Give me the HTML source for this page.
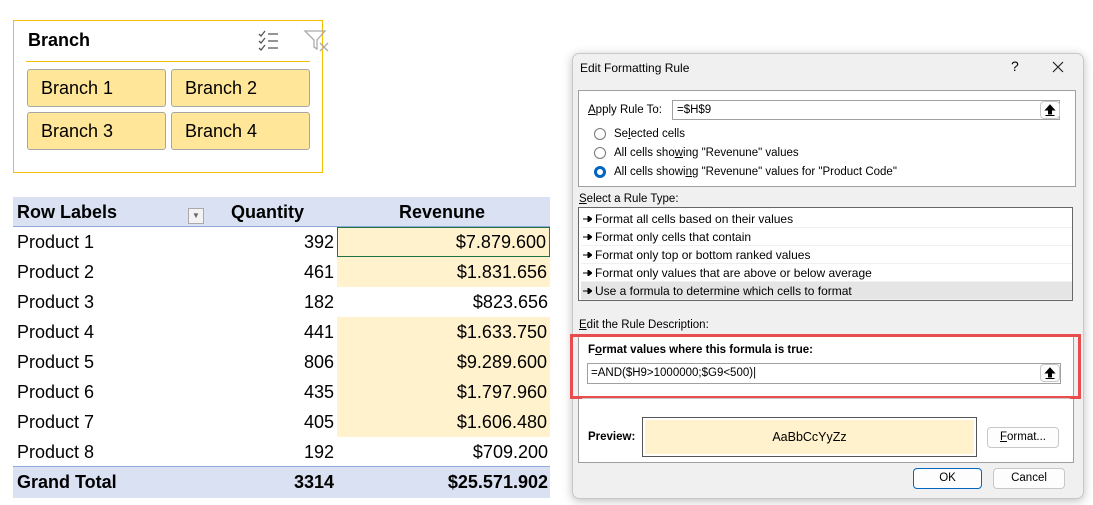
<!DOCTYPE html><html><head><style>
body{margin:0;width:1093px;height:505px;background:#fff;position:relative;overflow:hidden;font-family:"Liberation Sans",sans-serif;}
.a{position:absolute}
.slb{background:#ffe699;border:1px solid #a6a6a6;border-radius:3px;font-size:18px;line-height:36px;padding-left:13px;box-sizing:border-box;height:38px}
.row{position:absolute;left:13px;width:537px;height:30px;font-size:18px;line-height:30px}
.row span{position:absolute}
.d{font-size:11.5px;color:#000}
.ul{text-decoration:underline}
.btn{position:absolute;border:1px solid #c8c8c8;background:#fdfdfd;border-radius:4px;font-size:11.5px;text-align:center;box-sizing:border-box}
.radio{position:absolute;left:594px;width:12px;height:12px;border:1px solid #777;border-radius:50%;box-sizing:border-box;background:#fff}
.li{position:absolute;left:581px;width:491px;height:18px;line-height:18px;font-size:12px;border-bottom:1px solid #f0f0f0;box-sizing:border-box;padding-left:2px}
.ar{display:inline-block;width:9px;height:6px;margin-right:3px;vertical-align:1px}
</style></head><body>
<div class="a" style="left:13px;top:20px;width:308px;height:151px;border:1px solid #f5c000"></div>
<div class="a" style="left:28px;top:30px;font-size:18px;font-weight:bold">Branch</div>
<svg class="a" style="left:257px;top:29px" width="26" height="24"><g stroke="#555" fill="none" stroke-width="1.3"><path d="M2 5l2 2 4-5M2 12l2 2 4-5M2 19l2 2 4-5"/><path d="M11 5h10M11 12h10M11 19h10"/></g></svg>
<svg class="a" style="left:303px;top:29px" width="28" height="24"><path d="M2 2h20l-8 9v9l-3-2v-7z" fill="none" stroke="#aaa" stroke-width="1.3"/><path d="M17 14l8 8M25 14l-8 8" stroke="#aaa" stroke-width="1.3"/></svg>
<div class="a" style="left:26px;top:61px;width:284px;height:1px;background:#f5c000"></div>
<div class="a slb" style="left:27px;top:69px;width:139px">Branch 1</div>
<div class="a slb" style="left:171px;top:69px;width:139px">Branch 2</div>
<div class="a slb" style="left:27px;top:112px;width:139px">Branch 3</div>
<div class="a slb" style="left:171px;top:112px;width:139px">Branch 4</div>

<div class="row" style="top:197px;background:#d9e1f2;font-weight:bold;border-bottom:1px solid #8eaadb;height:29px"><span style="left:4px">Row Labels</span><span style="left:218px">Quantity</span><span style="left:386px">Revenune</span>
<div class="a" style="left:175px;top:11px;width:14px;height:14px;border:1px solid #aaa;background:#f3f3f3;font-size:8px;line-height:14px;text-align:center;color:#666">▼</div></div>
<div class="row" style="top:227px"><span style="left:4px">Product 1</span><span style="right:216px">392</span><span style="left:324px;width:211px;height:28px;background:#fff2cc;border:1px solid #217346;line-height:28px;text-align:right;box-sizing:content-box"><span style="right:3px;position:absolute">$7.879.600</span></span></div>
<div class="row" style="top:257px"><span style="left:4px">Product 2</span><span style="right:216px">461</span><span style="left:324px;width:213px;background:#fff2cc"><span style="right:3px;position:absolute">$1.831.656</span>&nbsp;</span></div>
<div class="row" style="top:287px"><span style="left:4px">Product 3</span><span style="right:216px">182</span><span style="right:2px">$823.656</span></div>
<div class="row" style="top:317px"><span style="left:4px">Product 4</span><span style="right:216px">441</span><span style="left:324px;width:213px;background:#fff2cc"><span style="right:3px;position:absolute">$1.633.750</span>&nbsp;</span></div>
<div class="row" style="top:347px"><span style="left:4px">Product 5</span><span style="right:216px">806</span><span style="left:324px;width:213px;background:#fff2cc"><span style="right:3px;position:absolute">$9.289.600</span>&nbsp;</span></div>
<div class="row" style="top:377px"><span style="left:4px">Product 6</span><span style="right:216px">435</span><span style="left:324px;width:213px;background:#fff2cc"><span style="right:3px;position:absolute">$1.797.960</span>&nbsp;</span></div>
<div class="row" style="top:407px"><span style="left:4px">Product 7</span><span style="right:216px">405</span><span style="left:324px;width:213px;background:#fff2cc"><span style="right:3px;position:absolute">$1.606.480</span>&nbsp;</span></div>
<div class="row" style="top:437px"><span style="left:4px">Product 8</span><span style="right:216px">192</span><span style="right:2px">$709.200</span></div>
<div class="row" style="top:466px;height:31px;background:#d9e1f2;border-top:1px solid #8eaadb;font-weight:bold"><span style="left:4px">Grand Total</span><span style="right:216px">3314</span><span style="right:2px">$25.571.902</span></div>

<div class="a" style="left:572px;top:53px;width:510px;height:444px;background:#f0f0f0;border:1px solid #c8c8c8;border-radius:7px;box-shadow:0 2px 10px rgba(0,0,0,.25)"></div>
<div class="a d" style="left:580px;top:61px;font-size:12px">Edit Formatting Rule</div>
<div class="a" style="left:1011px;top:58px;font-size:14px">?</div>
<svg class="a" style="left:1052px;top:61px" width="12" height="12"><path d="M1 1l10 10M11 1L1 11" stroke="#222" stroke-width="1.2"/></svg>
<div class="a" style="left:578px;top:90px;width:496px;height:95px;background:#fff;border:1px solid #a0a0a0"></div>
<div class="a d" style="left:588px;top:104px"><span class="ul">A</span>pply Rule To:</div>
<div class="a" style="left:672px;top:100px;width:388px;height:20px;border:1px solid #a0a0a0;background:#fff;box-sizing:border-box;font-size:11.5px;line-height:18px;padding-left:4px">=$H$9</div>
<div class="btn" style="left:1040px;top:101px;width:20px;height:18px"><svg width="12" height="14" style="margin-top:1px"><path d="M6 2L1.5 7H4.5v4h3V7h3z M1.5 12.5h9" fill="#000" stroke="#000" stroke-width="1"/></svg></div>
<div class="radio" style="top:128px"></div><div class="a d" style="left:614px;top:128px">Se<span class="ul">l</span>ected cells</div>
<div class="radio" style="top:147px"></div><div class="a d" style="left:614px;top:147px">All cells sho<span class="ul">w</span>ing "Revenune" values</div>
<div class="radio" style="top:166px;border:3.5px solid #0067c0"></div><div class="a d" style="left:614px;top:166px">All cells showi<span class="ul">n</span>g "Revenune" values for "Product Code"</div>
<div class="a d" style="left:579px;top:193px"><span class="ul">S</span>elect a Rule Type:</div>
<div class="a" style="left:578px;top:207px;width:495px;height:94px;background:#fff;border:1px solid #666;box-sizing:border-box"></div>
<div class="li" style="top:210px"><svg class="ar"><path d="M0 3h5M5 0l4 3-4 3z" stroke="#000" fill="#000"/></svg>Format all cells based on their values</div>
<div class="li" style="top:228px"><svg class="ar"><path d="M0 3h5M5 0l4 3-4 3z" stroke="#000" fill="#000"/></svg>Format only cells that contain</div>
<div class="li" style="top:246px"><svg class="ar"><path d="M0 3h5M5 0l4 3-4 3z" stroke="#000" fill="#000"/></svg>Format only top or bottom ranked values</div>
<div class="li" style="top:264px"><svg class="ar"><path d="M0 3h5M5 0l4 3-4 3z" stroke="#000" fill="#000"/></svg>Format only values that are above or below average</div>
<div class="li" style="top:282px;background:#e5e5e5"><svg class="ar"><path d="M0 3h5M5 0l4 3-4 3z" stroke="#000" fill="#000"/></svg>Use a formula to determine which cells to format</div>
<div class="a d" style="left:579px;top:319px"><span class="ul">E</span>dit the Rule Description:</div>
<div class="a" style="left:578px;top:335px;width:496px;height:128px;background:#fff;border:1px solid #a0a0a0;box-sizing:border-box"></div>
<div class="a" style="left:570px;top:334px;width:505px;height:59px;border:3px solid #e94c4c;box-sizing:content-box"></div>
<div class="a" style="left:582px;top:398px;width:488px;height:1px;background:#c8c8c8"></div>
<div class="a d" style="left:588px;top:344px;font-weight:bold">F<span class="ul">o</span>rmat values where this formula is true:</div>
<div class="a" style="left:587px;top:363px;width:474px;height:21px;border:1px solid #a0a0a0;background:#fff;box-sizing:border-box;font-size:11.5px;line-height:19px;padding-left:3px">=AND($H9&gt;1000000;$G9&lt;500)|</div>
<div class="btn" style="left:1040px;top:364px;width:20px;height:18px"><svg width="12" height="14" style="margin-top:1px"><path d="M6 2L1.5 7H4.5v4h3V7h3z M1.5 12.5h9" fill="#000" stroke="#000" stroke-width="1"/></svg></div>
<div class="a d" style="left:588px;top:431px;font-weight:bold">Preview:</div>
<div class="a" style="left:642px;top:417px;width:335px;height:40px;border:1px solid #555;box-sizing:border-box;background:#fff2cc;outline:2px solid #fff;outline-offset:-3px;text-align:center;line-height:38px;font-size:12.5px">AaBbCcYyZz</div>
<div class="btn" style="left:987px;top:427px;width:72px;height:21px;line-height:19px"><span class="ul">F</span>ormat...</div>
<div class="btn" style="left:913px;top:468px;width:69px;height:21px;line-height:19px;border-color:#0067c0">OK</div>
<div class="btn" style="left:993px;top:468px;width:72px;height:21px;line-height:19px">Cancel</div>
</body></html>
